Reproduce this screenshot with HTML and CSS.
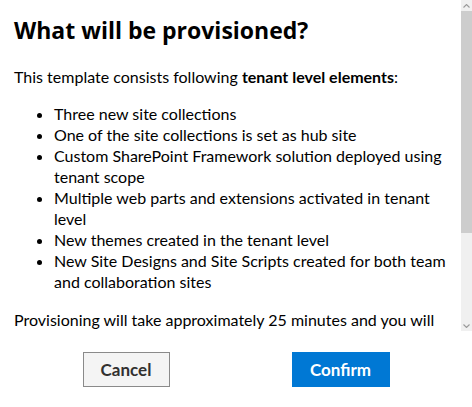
FILE: index.html
```html
<!DOCTYPE html>
<html lang="en">
<head>
<meta charset="utf-8">
<title>What will be provisioned?</title>
<link rel="stylesheet" href="styles.css">
</head>
<body>
<div class="dialog">
  <div class="viewport">
    <div class="content">
      <h2 class="title">What will be provisioned?</h2>
      <p class="text">This template consists following <b>tenant level elements</b>:</p>
      <ul class="list">
        <li>Three new site collections</li>
        <li>One of the site collections is set as hub site</li>
        <li>Custom SharePoint Framework solution deployed using tenant scope</li>
        <li>Multiple web parts and extensions activated in tenant level</li>
        <li>New themes created in the tenant level</li>
        <li>New Site Designs and Site Scripts created for both team and collaboration sites</li>
      </ul>
      <p class="text">Provisioning will take approximately 25 minutes and you will be notified when the provisioning has been completed.</p>
    </div>
    <div class="scrollbar" aria-hidden="true">
      <div class="sb-btn">
        <svg width="7" height="4" viewBox="0 0 7 4"><path d="M0.5 3.5 L3.5 0.5 L6.5 3.5" fill="none" stroke="#9a9a9a" stroke-width="1.1"/></svg>
      </div>
      <div class="sb-track">
        <div class="sb-thumb"></div>
      </div>
      <div class="sb-btn">
        <svg width="7" height="4" viewBox="0 0 7 4"><path d="M0.5 0.5 L3.5 3.5 L6.5 0.5" fill="none" stroke="#9a9a9a" stroke-width="1.1"/></svg>
      </div>
    </div>
  </div>
  <div class="footer">
    <button class="btn btn-cancel" type="button">Cancel</button>
    <button class="btn btn-confirm" type="button">Confirm</button>
  </div>
</div>
</body>
</html>
```
FILE: styles.css
```css
html, body {
  margin: 0;
  padding: 0;
  background: #fff;
}
body {
  font-family: "Lato", "Noto Sans", sans-serif;
  color: #000;
}
.dialog {
  width: 472px;
  height: 407px;
  display: flex;
  flex-direction: column;
}
.viewport {
  height: 331px;
  display: flex;
}
.content {
  flex: 1;
  min-width: 0;
  overflow: hidden;
  box-sizing: border-box;
  padding: 15px 11px 0 14px;
}
.scrollbar {
  width: 11px;
  display: flex;
  flex-direction: column;
  background: #f0f0f0;
}
.sb-btn {
  height: 11px;
  display: flex;
  align-items: center;
  justify-content: center;
  flex: none;
}
.sb-btn svg {
  display: block;
}
.sb-track {
  flex: 1;
}
.sb-thumb {
  height: 222px;
  background: #cdcdcd;
}
.title {
  margin: 0 0 20px;
  font-family: "Open Sans", sans-serif;
  font-weight: 700;
  font-size: 23px;
  line-height: 31px;
}
.text {
  margin: 0;
  font-size: 16px;
  line-height: 21px;
}
.text b {
  font-weight: 700;
}
.list {
  margin: 16px 0 17px;
  padding-left: 40px;
  font-size: 16px;
  line-height: 21px;
}
.footer {
  display: flex;
  justify-content: center;
  gap: 122px;
  padding-top: 21px;
}
.btn {
  height: 35px;
  box-sizing: border-box;
  font-family: "Lato", sans-serif;
  font-weight: 700;
  font-size: 17px;
  padding: 0;
  cursor: pointer;
}
.btn-cancel {
  width: 87px;
  background: #f4f4f4;
  border: 1px solid #8a8a8a;
  color: #323130;
}
.btn-confirm {
  width: 98px;
  background: #0078d4;
  border: none;
  color: #fff;
}
```
